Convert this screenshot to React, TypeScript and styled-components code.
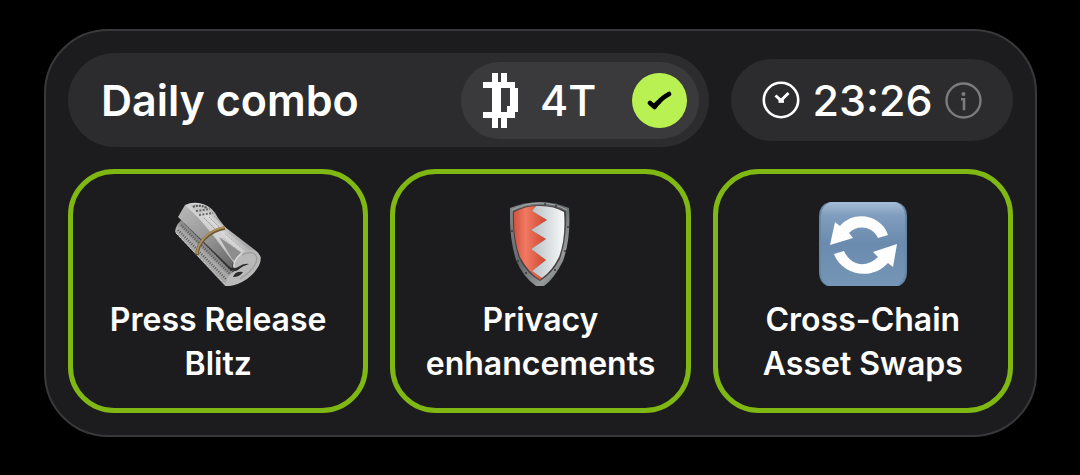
import React from 'react';
import styled, { createGlobalStyle } from 'styled-components';

const GlobalStyle = createGlobalStyle`
  *, *::before, *::after { box-sizing: border-box; }
  body {
    margin: 0;
    background: #000;
    color: #fff;
    font-family: Inter, "Liberation Sans", sans-serif;
  }
  svg { display: block; flex: none; }
`;

const Page = styled.main`
  padding: 29px 43px 29px 44px;
`;

const Panel = styled.section`
  display: flex;
  flex-direction: column;
  gap: 22px;
  padding: 22px;
  border: 2px solid #39393b;
  border-radius: 64px;
  background: #1c1c1e;
`;

const Header = styled.header`
  display: flex;
  align-items: center;
  gap: 22px;
`;

const Combo = styled.div`
  flex: 1;
  display: flex;
  align-items: center;
  justify-content: space-between;
  min-height: 94px;
  padding: 8px 10px 8px 33px;
  border-radius: 47px;
  background: #2c2c2e;
`;

const Title = styled.h1`
  margin: 0;
  font-size: 43px;
  line-height: 52px;
  font-weight: 600;
`;

const Reward = styled.div`
  display: flex;
  align-items: center;
  width: 238px;
  min-height: 77px;
  padding: 0 12px 0 22px;
  border-radius: 39px;
  background: #3a3a3c;
`;

const Amount = styled.span`
  margin-left: 22px;
  font-size: 43px;
  line-height: 52px;
  font-weight: 500;
`;

const Claimed = styled.span`
  display: grid;
  place-items: center;
  width: 55px;
  height: 55px;
  margin-left: auto;
  border-radius: 50%;
  background: #baf152;
`;

const Timer = styled.div`
  display: flex;
  align-items: center;
  justify-content: space-between;
  width: 282px;
  min-height: 82px;
  padding: 0 31px;
  border-radius: 41px;
  background: #2c2c2e;
`;

const Time = styled.time`
  font-size: 43px;
  line-height: 52px;
  font-weight: 500;
`;

const InfoButton = styled.button`
  padding: 0;
  border: 0;
  background: none;
  color: #7c7c7e;
  cursor: pointer;
`;

const Cards = styled.div`
  display: grid;
  grid-template-columns: repeat(3, 1fr);
  gap: 22px;
`;

const Card = styled.article`
  display: flex;
  flex-direction: column;
  align-items: center;
  gap: 12px;
  min-height: 244px;
  padding: 28px 16px 22px;
  border: 5px solid #80b813;
  border-radius: 46px;
`;

const CardName = styled.h2`
  max-width: 252px;
  margin: 0;
  font-size: 32px;
  line-height: 44px;
  font-weight: 600;
  text-align: center;
`;

const CoinIcon = () => (
  <svg width="35" height="55" viewBox="0 0 35 55" fill="#fff" shapeRendering="crispEdges" aria-hidden="true">
    <path fillRule="evenodd" d="M9 0h6v9h3V0h6v9h8v6h3v24h-3v6h-8v10h-6V45h-3v10H9V45H0v-6h9V15H0V9h9zM18 15v24h6v-6h3V15z" />
  </svg>
);

const CheckIcon = () => (
  <svg width="25" height="19" viewBox="0 0 25 19" fill="none" stroke="#000" strokeWidth="4.6" strokeLinecap="round" strokeLinejoin="round" aria-hidden="true">
    <path d="M3 12L7.6 16Q13 8 22 3" />
    <path d="M7.5 14.5L12 11" />
  </svg>
);

const ClockIcon = () => (
  <svg width="38" height="38" viewBox="0 0 38 38" fill="none" stroke="#fff" strokeWidth="2.6" aria-hidden="true">
    <circle cx="19" cy="19" r="17.2" />
    <path d="M13.5 14.5L19 19.5L26.5 12" strokeWidth="3" />
    <path d="M16.5 20.5h5.5" strokeWidth="2.6" />
  </svg>
);

const InfoIcon = () => (
  <svg width="37" height="37" viewBox="0 0 37 37" fill="none" stroke="currentColor" strokeWidth="2.4" aria-hidden="true">
    <circle cx="18.5" cy="18.5" r="17" />
    <circle cx="18.5" cy="12" r="2" fill="currentColor" stroke="none" />
    <path d="M16 17.2h3v11" strokeWidth="2.6" />
  </svg>
);

const NewspaperArt = () => (
  <svg width="86" height="84" viewBox="0 0 86 84" aria-hidden="true">
    <defs>
      <linearGradient id="roll-low" x1="16" y1="54" x2="34" y2="36" gradientUnits="userSpaceOnUse">
        <stop offset="0" stopColor="#858585" />
        <stop offset=".35" stopColor="#b4b4b4" />
        <stop offset=".7" stopColor="#858585" />
        <stop offset="1" stopColor="#444" />
      </linearGradient>
      <linearGradient id="roll-top" x1="38" y1="46" x2="58" y2="28" gradientUnits="userSpaceOnUse">
        <stop offset="0" stopColor="#8a8a8a" />
        <stop offset=".3" stopColor="#c9c9c9" />
        <stop offset=".65" stopColor="#dcdcdc" />
        <stop offset="1" stopColor="#a6a6a6" />
      </linearGradient>
      <linearGradient id="roll-flap" x1="6" y1="8" x2="58" y2="64" gradientUnits="userSpaceOnUse">
        <stop offset="0" stopColor="#b5b5b5" />
        <stop offset=".5" stopColor="#979797" />
        <stop offset="1" stopColor="#686868" />
      </linearGradient>
    </defs>
    <path d="M8 17Q1 21 0 30L50 84 61 80 66 68Z" fill="url(#roll-low)" />
    <path d="M3 28L53 79M6 23L58 75" stroke="#626262" strokeWidth="2.4" strokeDasharray="1.2 1.2" />
    <path d="M1 31L50 82" stroke="#d0d0d0" strokeWidth="1" strokeDasharray="3 1" />
    <path d="M10 21L60 72" stroke="#474747" strokeWidth="2" strokeDasharray="1.5 1" />
    <path d="M5 16L56 69 62 64 10 12Z" fill="#333" />
    <path d="M10 3Q18-1 28 2Q38 5 43 16L50 25 80 48Q84 51 86 56L62 64 10 12Z" fill="url(#roll-top)" />
    <path d="M3 15L10 3Q27 17 58 60L57 67Z" fill="url(#roll-flap)" />
    <path d="M11 4Q34 24 61 59L68 50Q42 28 25 9Z" fill="#d3d3d3" />
    <path d="M44 35L67 51 61 60 57 57Z" fill="#8d8d8d" />
    <path d="M15 3Q23 0 30 4L35 9 22 12Z" fill="#c6c6c6" />
    <path d="M18 5Q24 2 32 6" fill="none" stroke="#555" strokeWidth="2" strokeDasharray="2 1" />
    <path d="M21 9L35 7M24 13L38 11" fill="none" stroke="#686868" strokeWidth="2" strokeDasharray="2 1.4" />
    <path d="M29 16L43 30M34 15L47 28M39 14L51 26" stroke="#999" strokeWidth="1" strokeDasharray="2 1" />
    <path d="M50 32L72 50M54 31L76 48M47 36L68 52" stroke="#aaa" strokeWidth="1" strokeDasharray="1.5 1" />
    <path d="M50 84C51 76 54 72 60 69C56 65 60 57 67 51Q79 43 85 54C88 61 80 71 72 77Q60 85 50 84Z" fill="#b9b9b9" />
    <path d="M67 53Q79 47 82 56Q81 67 65 77" fill="none" stroke="#a0a0a0" strokeWidth="1.5" />
    <path d="M67 51Q58 58 59 65" fill="none" stroke="#dedede" strokeWidth="1.4" />
    <path d="M54 64Q57 68 63 65Q69 61 74 62Q67 64 63 68Q57 71 54 64Z" fill="#292929" />
    <path d="M58 75Q60 69 68 70Q65 75 58 75Z" fill="#292929" />
    <path d="M22 53C22 43 32 29 50 26" fill="none" stroke="#6e5937" strokeWidth="3.4" />
    <path d="M22 52C22 42 32 28 50 25" fill="none" stroke="#ae9158" strokeWidth="1.8" />
  </svg>
);

const ShieldArt = () => (
  <svg width="60" height="84" viewBox="0 0 60 84" aria-hidden="true">
    <defs>
      <linearGradient id="shield-rim" x1="0" y1="0" x2="1" y2="1">
        <stop offset="0" stopColor="#85898b" />
        <stop offset=".45" stopColor="#62676a" />
        <stop offset=".75" stopColor="#969a9b" />
        <stop offset="1" stopColor="#555b5e" />
      </linearGradient>
      <linearGradient id="shield-red" x1="0" y1="0" x2="1" y2="0">
        <stop offset="0" stopColor="#d05340" />
        <stop offset=".35" stopColor="#f17963" />
        <stop offset="1" stopColor="#cf452c" />
      </linearGradient>
      <linearGradient id="shield-white" x1="0" y1="0" x2="1" y2="0">
        <stop offset="0" stopColor="#b9c0c3" />
        <stop offset="1" stopColor="#f6f9fa" />
      </linearGradient>
    </defs>
    <path d="M0 6Q15 0 30 0T59 6Q61 37 53 59 44 77 34 84H26Q13 75 6 58-1 35 0 6Z" fill="url(#shield-rim)" />
    <path d="M3 9Q16 3 30 3T56 9Q57 36 50 57 42 72 30 79 17 72 9 56 2 36 3 9Z" fill="#4b4040" />
    <path d="M4 10Q16 4 26 4L22 9 37 18 21 28 36 37 21 47 36 58 22 69 32 76 30 78Q18 70 10 55 3 36 4 10Z" fill="url(#shield-red)" />
    <path d="M26 4Q43 3 54 10 56 36 49 55 42 69 32 76L22 69 36 58 21 47 36 37 21 28 37 18 22 9Z" fill="url(#shield-white)" />
    <path d="M2 8Q16 1 30 1T57 8" fill="none" stroke="#a4a9aa" strokeWidth="1" />
    <g fill="#353b3e">
      <circle cx="35" cy="2" r="1" /><circle cx="46" cy="4" r="1" />
      <circle cx="58" cy="25" r="1" /><circle cx="55" cy="49" r="1" />
      <circle cx="8" cy="59" r="1" /><circle cx="16" cy="71" r="1" />
      <circle cx="45" cy="68" r="1" /><circle cx="2" cy="29" r="1" />
    </g>
  </svg>
);

const SwapArt = () => (
  <svg width="88" height="84" viewBox="0 0 88 84" aria-hidden="true">
    <defs>
      <linearGradient id="swap-tile" x1="0" y1="0" x2="0" y2="1">
        <stop offset="0" stopColor="#a5bdd6" />
        <stop offset=".16" stopColor="#809dbe" />
        <stop offset=".5" stopColor="#6a8bae" />
        <stop offset="1" stopColor="#7696b6" />
      </linearGradient>
    </defs>
    <path d="M10 0H78Q88 3 88 14V70Q88 80 80 84H8Q0 80 0 70V14Q0 3 10 0Z" fill="#6686a8" />
    <path d="M12 0H76Q86 3 86 14V70Q85 80 78 84H10Q2 80 2 70V14Q2 3 12 0Z" fill="url(#swap-tile)" />
    <g fill="#fff">
      <path d="M16 20L21 24C36 7 63 14 69 33L59 36C53 23 37 23 30 31L34 36 11 43Z" />
      <path d="M78 42L74 65 69 61C52 80 22 72 15 52L25 49C33 66 49 65 59 55L54 50Z" />
    </g>
  </svg>
);

const cards = [
  { name: 'Press Release Blitz', art: <NewspaperArt /> },
  { name: 'Privacy enhancements', art: <ShieldArt /> },
  { name: 'Cross-Chain Asset Swaps', art: <SwapArt /> },
];

export default function App() {
  return (
    <>
      <GlobalStyle />
      <Page>
        <Panel>
          <Header>
            <Combo>
              <Title>Daily combo</Title>
              <Reward>
                <CoinIcon />
                <Amount>4T</Amount>
                <Claimed role="img" aria-label="Claimed"><CheckIcon /></Claimed>
              </Reward>
            </Combo>
            <Timer>
              <ClockIcon />
              <Time>23:26</Time>
              <InfoButton type="button" aria-label="About the daily combo"><InfoIcon /></InfoButton>
            </Timer>
          </Header>
          <Cards>
            {cards.map((card) => (
              <Card key={card.name}>
                {card.art}
                <CardName>{card.name}</CardName>
              </Card>
            ))}
          </Cards>
        </Panel>
      </Page>
    </>
  );
}
